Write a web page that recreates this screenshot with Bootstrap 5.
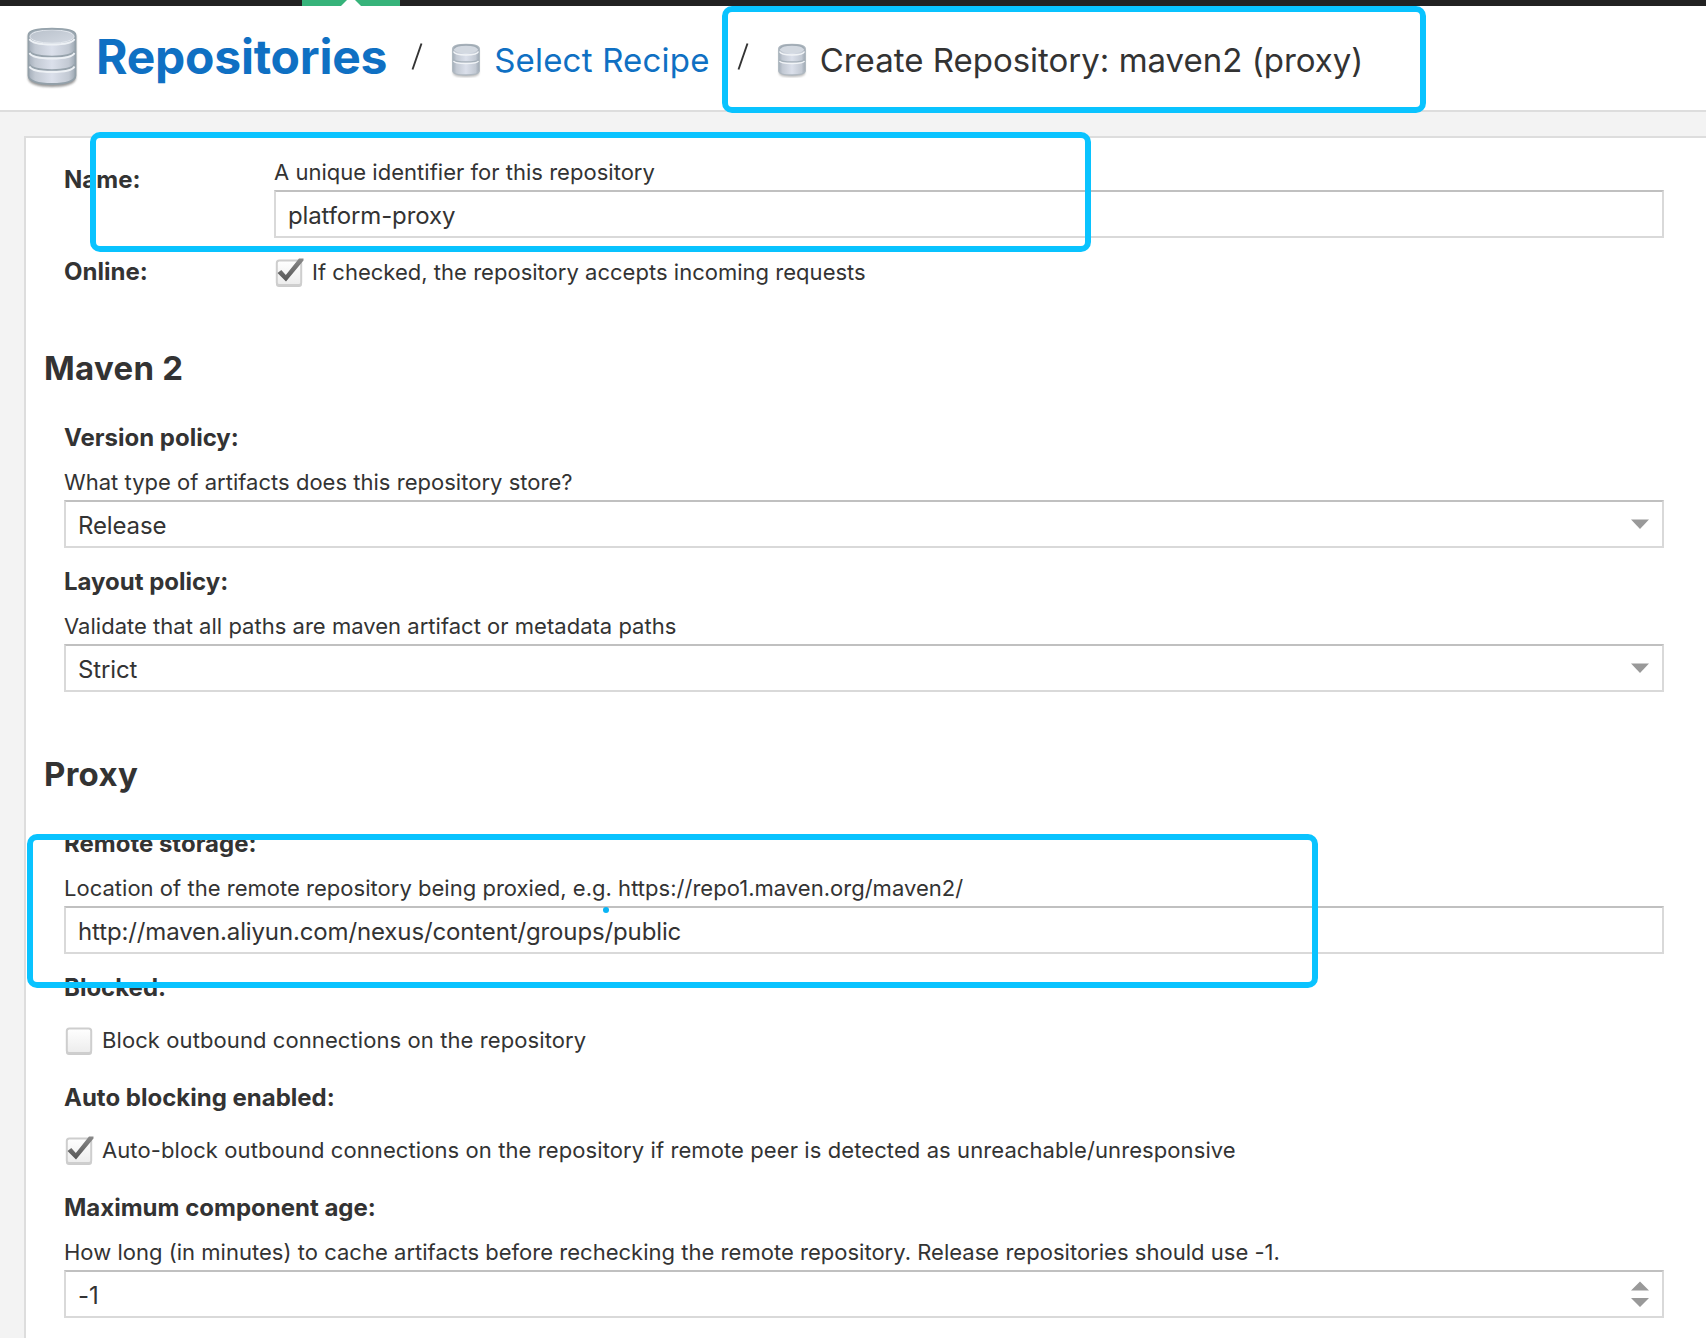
<!DOCTYPE html>
<html lang="en">
<head>
<meta charset="utf-8">
<title>Create Repository: maven2 (proxy)</title>
<link href="https://cdn.jsdelivr.net/npm/bootstrap@5.3.0/dist/css/bootstrap.min.css" rel="stylesheet">
<style>
  body { font-family: Inter, "Liberation Sans", sans-serif; color: #333; background: #f3f3f3; height: 1338px; overflow: hidden; }
  .topbar { height: 6px; background: #222; padding-left: 302px; }
  .active-tab { width: 98px; height: 6px; background: #36b37a; }
  .active-tab svg { display: block; margin: 0 auto; }
  .crumbs { height: 106px; border-bottom: 2px solid #ddd; padding-left: 24px; }
  .crumbs a { color: #0f70c3; }
  .crumb-root { font-size: 48px; line-height: 56px; font-weight: 700; letter-spacing: -.24px; margin: 23px 0 0 16px; }
  .crumb-item { font-size: 33px; line-height: 40px; margin: 33.5px 0 0 12px; }
  a.crumb-item { letter-spacing: .2px; }
  .icon-lg { margin-top: 19px; }
  .icon-sm { margin: 36px 0 0 27px; }
  .crumb-sep { margin: 36px 0 0 24px; }
  .crumb-item + .crumb-sep { margin-left: 27px; }
  .panel { margin: 24px 0 0 24px; border: solid #ddd; border-width: 2px 0 0 2px; height: 1202px; padding: 20px 42px 0 38px; }
  .side-label { width: 210px; }
  .name-label { padding-top: 7px; }
  .field-label { font-size: 24px; line-height: 30px; font-weight: 700; }
  .help { font-size: 22px; line-height: 28px; letter-spacing: .02px; }
  .gap-desc { margin-top: 15px; margin-bottom: 4px; }
  .entry { height: 48px; border: 2px solid #d9d9d9; border-top-color: #c0c0c0; background: #fff; padding-right: 12px; }
  .entry .form-control { font-size: 24px; line-height: 42px; height: 44px; padding: 2px 0 0 12px; color: #333; box-shadow: none; background: transparent; letter-spacing: -.13px; }
  .field-block { margin-bottom: 19px; }
  .online-row { margin: 19px 0 61px; }
  .online-check { height: 29px; padding-top: 1px; }
  .section-title { font-size: 33px; line-height: 40px; font-weight: 700; margin: 0 0 35px -20px; letter-spacing: .3px; }
  .field-block + .section-title { margin-top: 62px; }
  .check-line { margin-top: 23px; margin-bottom: 29px; height: 28px; letter-spacing: .09px; }
  .tick { margin: 0 8px 0 0; flex: none; }
  .highlight { position: absolute; border: 6px solid #09c3ff; border-radius: 10px; pointer-events: none; }
  .hl-title { left: 722px; top: 5.5px; width: 704px; height: 107.5px; }
  .hl-name { left: 90px; top: 131.5px; width: 1001px; height: 120.5px; }
  .hl-remote { left: 26.5px; top: 833.5px; width: 1291.5px; height: 154.5px; }
  .hl-dot { position: absolute; left: 603px; top: 907px; width: 6px; height: 6px; border-radius: 50%; background: #09b4f5; }
</style>
</head>
<body class="position-relative">

<svg width="0" height="0" class="position-absolute">
  <defs>
    <linearGradient id="drum" x1="0" x2="1" y1="0" y2="0">
      <stop offset="0" stop-color="#a3adb9"/><stop offset=".14" stop-color="#c2c9d3"/><stop offset=".5" stop-color="#dbe0eb"/><stop offset=".86" stop-color="#c2c9d3"/><stop offset="1" stop-color="#9ca7b2"/>
    </linearGradient>
    <linearGradient id="lid" x1="0" x2="1" y1="0" y2="1">
      <stop offset="0" stop-color="#b9c1cb"/><stop offset="1" stop-color="#d3d9e2"/>
    </linearGradient>
    <linearGradient id="boxfill" x1="0" x2="0" y1="0" y2="1">
      <stop offset="0" stop-color="#fff"/><stop offset="1" stop-color="#ececec"/>
    </linearGradient>
    <linearGradient id="tickfill" x1="0" x2="0" y1="0" y2="1">
      <stop offset="0" stop-color="#8a8a8a"/><stop offset="1" stop-color="#555"/>
    </linearGradient>
    <filter id="soft" x="-20%" y="-20%" width="140%" height="140%"><feGaussianBlur stdDeviation="1.3"/></filter>
    <symbol id="db-lg" viewBox="0 0 56 64">
      <path d="M4 10v43c0 6 10 9 24 9s24-3 24-9V10z" fill="#777" opacity=".75" filter="url(#soft)"/>
      <path d="M4.500 10C4.500 5 14 3.700 28 3.700S51.500 5 51.500 10v40.500c0 5.500-9.500 8.500-23.500 8.500s-23.500-3-23.500-8.500z" fill="url(#drum)" stroke="#93a0a9" stroke-width="1.800"/>
      <path d="M5.500 26c2 4 10 5.500 22.500 5.500S48.500 30 50.500 26M5.500 39.500c2 4 10 5.500 22.500 5.500s20.500-1.500 22.500-5.500" fill="none" stroke="#97a3ac" stroke-width="1.700"/>
      <path d="M5.500 28c2 4 10 5.500 22.500 5.500S48.500 32 50.500 28M5.500 41.500c2 4 10 5.500 22.500 5.500s20.500-1.500 22.500-5.500M5.500 14c2 4 10 5.500 22.500 5.500S48.500 18 50.500 14" fill="none" stroke="#edf1f5" stroke-width="1.800"/>
      <ellipse cx="28" cy="11.500" rx="22" ry="6.700" fill="url(#lid)" stroke="#e2e7ed" stroke-width="1"/>
      <path d="M5 10C6 5.500 15 4 28 4s22 1.500 23 6" fill="none" stroke="#98a5ae" stroke-width="1.600"/>
    </symbol>
    <symbol id="db-sm" viewBox="0 0 32 36">
      <path d="M3 8v23c0 3 5 4 13 4s13-1 13-4V8z" fill="#777" opacity=".5" filter="url(#soft)"/>
      <path d="M2.700 7C2.700 3.500 8 2.500 16 2.500S29.300 3.500 29.300 7v21.500c0 3.500-5.300 4.500-13.300 4.500s-13.300-1-13.300-4.500z" fill="url(#drum)" stroke="#b0b9c1" stroke-width="1.300"/>
      <path d="M3.500 17.500c1 2 6 2.500 12.500 2.500s11.500-.5 12.500-2.500" fill="none" stroke="#a5b0b9" stroke-width="1.300"/>
      <path d="M3.500 19c1 2 6 2.500 12.500 2.500s11.500-.5 12.500-2.500M3.500 9.500c1 2.500 6 3.500 12.500 3.500s11.500-1 12.500-3.500" fill="none" stroke="#f1f4f7" stroke-width="1.400"/>
      <ellipse cx="16" cy="7.500" rx="12" ry="3.800" fill="#d3d9e1"/>
      <path d="M4 6.500c1-2.500 6-3.500 12-3.500s11 1 12 3.500" fill="none" stroke="#a0abb4" stroke-width="1.700"/>
    </symbol>
    <symbol id="box-off" viewBox="0 0 30 30">
      <rect x="2" y="3" width="26" height="26" rx="3" fill="#aaa" opacity=".6"/>
      <rect x="2.800" y="2.500" width="24.400" height="24.500" rx="2.500" fill="url(#boxfill)" stroke="#cecece" stroke-width="2"/>
    </symbol>
    <symbol id="box-on" viewBox="0 0 30 30">
      <use href="#box-off" width="30" height="30"/>
      <path d="M3.500 15l3.800-3 4.500 5L25 .5H29.500V2.500L12 23.500z" fill="url(#tickfill)"/>
    </symbol>
    <symbol id="slash" viewBox="0 0 12 29"><path d="M1.500 27.500L10.500 1.500" stroke="#333" stroke-width="1.900"/></symbol>
    <symbol id="caret" viewBox="0 0 20 12"><path d="M1 1.500h18L10 11z" fill="#999"/></symbol>
  </defs>
</svg>

<div class="topbar">
  <div class="active-tab"><svg width="20" height="6"><path d="M0 6L6 0h8l6 6z" fill="#fff"/></svg></div>
</div>

<header class="crumbs bg-white d-flex align-items-start text-nowrap">
  <svg class="icon-lg" width="56" height="64"><use href="#db-lg"/></svg>
  <a href="#" class="crumb-root text-decoration-none">Repositories</a>
  <svg class="crumb-sep" width="12" height="29"><use href="#slash"/></svg>
  <svg class="icon-sm" width="32" height="36"><use href="#db-sm"/></svg>
  <a href="#" class="crumb-item text-decoration-none">Select Recipe</a>
  <svg class="crumb-sep" width="12" height="29"><use href="#slash"/></svg>
  <svg class="icon-sm" width="32" height="36"><use href="#db-sm"/></svg>
  <span class="crumb-item">Create Repository: maven2 (proxy)</span>
</header>

<main class="panel bg-white">
  <div class="d-flex">
    <label class="side-label field-label name-label">Name:</label>
    <div class="flex-grow-1">
      <div class="help mb-1">A unique identifier for this repository</div>
      <div class="entry d-flex"><input class="form-control border-0 rounded-0" value="platform-proxy"></div>
    </div>
  </div>
  <div class="online-row d-flex align-items-start">
    <label class="side-label field-label">Online:</label>
    <div class="online-check d-flex help">
      <svg class="tick" width="30" height="30"><use href="#box-on"/></svg>
      <span>If checked, the repository accepts incoming requests</span>
    </div>
  </div>

  <h2 class="section-title">Maven 2</h2>
  <div class="field-block">
    <div class="field-label">Version policy:</div>
    <div class="help gap-desc">What type of artifacts does this repository store?</div>
    <div class="entry d-flex align-items-center"><input class="form-control border-0 rounded-0" value="Release"><svg width="20" height="12" class="flex-shrink-0"><use href="#caret"/></svg></div>
  </div>
  <div class="field-block">
    <div class="field-label">Layout policy:</div>
    <div class="help gap-desc">Validate that all paths are maven artifact or metadata paths</div>
    <div class="entry d-flex align-items-center"><input class="form-control border-0 rounded-0" value="Strict"><svg width="20" height="12" class="flex-shrink-0"><use href="#caret"/></svg></div>
  </div>

  <h2 class="section-title">Proxy</h2>
  <div class="field-block">
    <div class="field-label">Remote storage:</div>
    <div class="help gap-desc">Location of the remote repository being proxied, e.g. https://repo1.maven.org/maven2/</div>
    <div class="entry d-flex"><input class="form-control border-0 rounded-0" value="http://maven.aliyun.com/nexus/content/groups/public"></div>
  </div>
  <div class="field-label">Blocked:</div>
  <div class="help check-line d-flex"><svg class="tick" width="30" height="30"><use href="#box-off"/></svg>Block outbound connections on the repository</div>
  <div class="field-label">Auto blocking enabled:</div>
  <div class="help check-line d-flex"><svg class="tick" width="30" height="30"><use href="#box-on"/></svg>Auto-block outbound connections on the repository if remote peer is detected as unreachable/unresponsive</div>
  <div class="field-label">Maximum component age:</div>
  <div class="help gap-desc">How long (in minutes) to cache artifacts before rechecking the remote repository. Release repositories should use -1.</div>
  <div class="entry d-flex align-items-center"><input class="form-control border-0 rounded-0" value="-1"><svg width="20" height="28" class="flex-shrink-0"><path d="M1 10.500h18L10 1.500zM1 18h18L10 27z" fill="#999"/></svg></div>
</main>

<div class="highlight hl-title"></div>
<div class="highlight hl-name"></div>
<div class="highlight hl-remote"></div>
<div class="hl-dot"></div>

<script src="https://cdn.jsdelivr.net/npm/bootstrap@5.3.0/dist/js/bootstrap.bundle.min.js"></script>
</body>
</html>
